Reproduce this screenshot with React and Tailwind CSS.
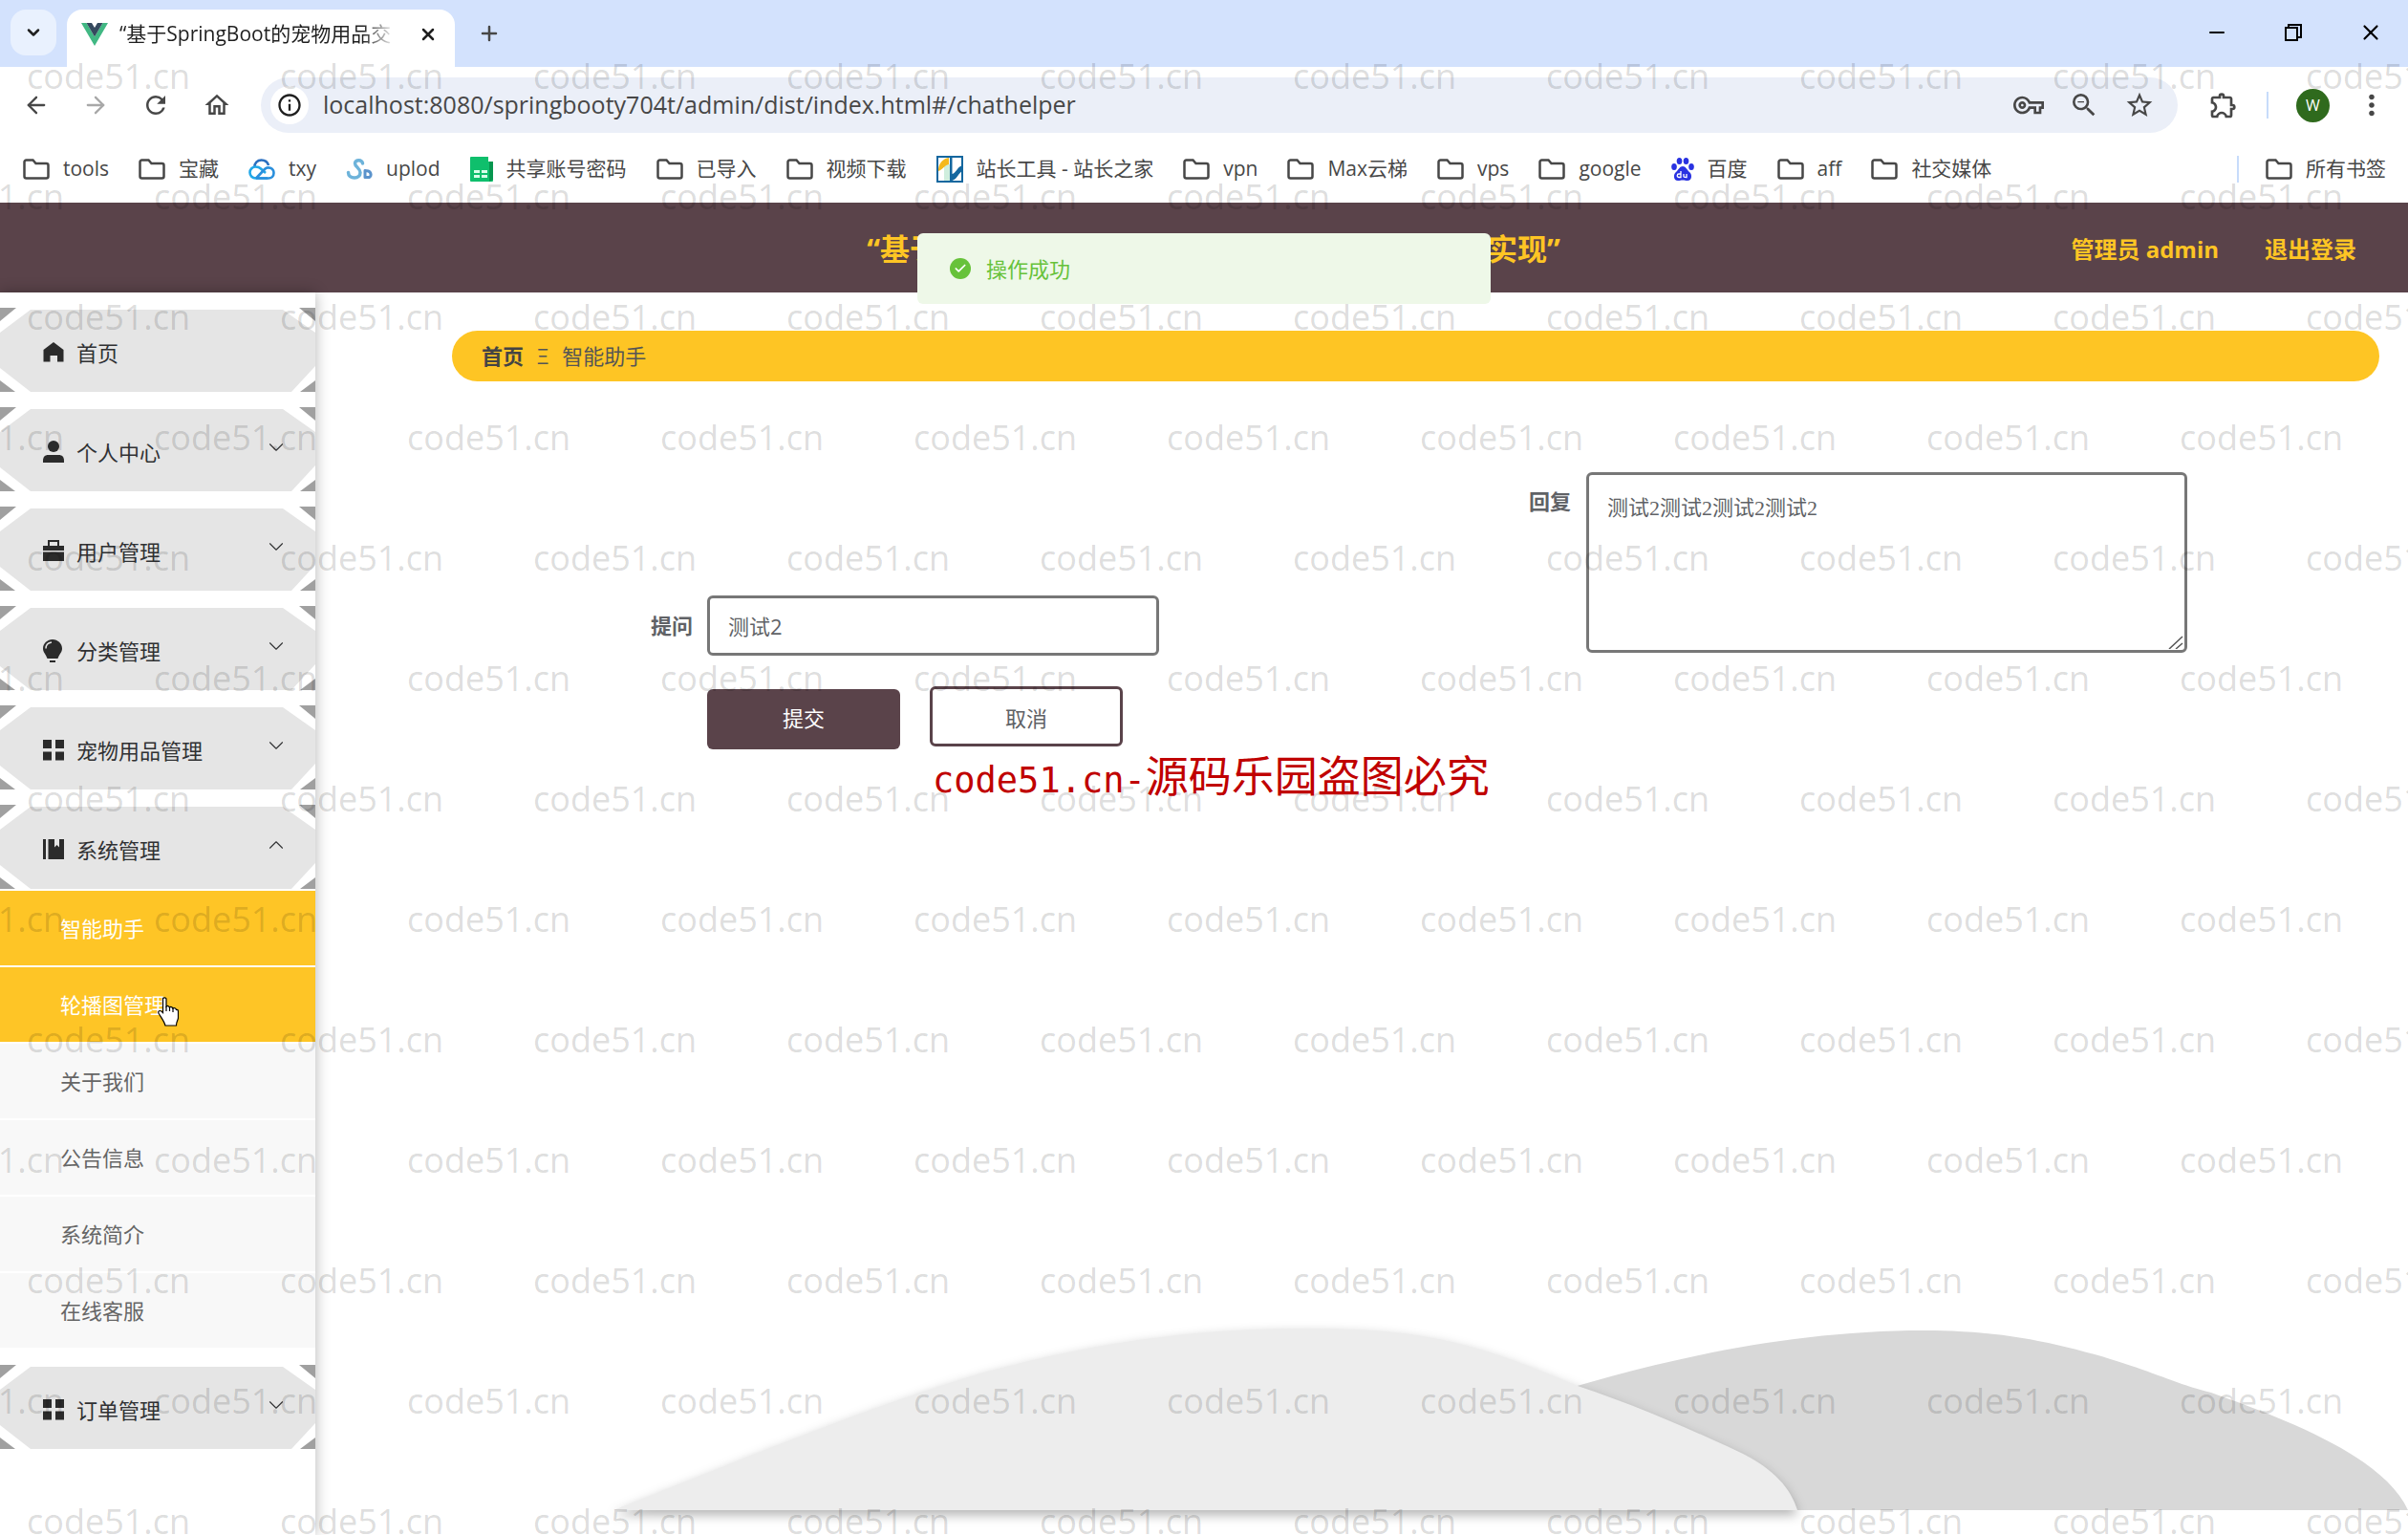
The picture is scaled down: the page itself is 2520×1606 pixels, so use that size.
import React from 'react';
import { ArrowLeft, ArrowRight, Check, ChevronDown, ChevronUp, Minus, Plus, X } from 'lucide-react';
import {
  MdInfoOutline,
  MdMoreVert,
  MdOutlineExtension,
  MdOutlineHome,
  MdOutlineVpnKey,
  MdRefresh,
  MdStarBorder,
  MdZoomOut,
} from 'react-icons/md';

const bookmarks = [
  { label: 'tools' },
  { label: '宝藏' },
  { label: 'txy', icon: 'cloud' },
  { label: 'uplod', icon: 'upload' },
  { label: '共享账号密码', icon: 'sheet' },
  { label: '已导入' },
  { label: '视频下载' },
  { label: '站长工具 - 站长之家', icon: 'zhan' },
  { label: 'vpn' },
  { label: 'Max云梯' },
  { label: 'vps' },
  { label: 'google' },
  { label: '百度', icon: 'baidu' },
  { label: 'aff' },
  { label: '社交媒体' },
];

const menus = [
  { label: '首页', icon: 'home' },
  { label: '个人中心', icon: 'user', children: [] },
  { label: '用户管理', icon: 'case', children: [] },
  { label: '分类管理', icon: 'bulb', children: [] },
  { label: '宠物用品管理', icon: 'grid', children: [] },
  {
    label: '系统管理',
    icon: 'book',
    open: true,
    children: [
      { label: '智能助手', active: true },
      { label: '轮播图管理', active: true, hover: true },
      { label: '关于我们' },
      { label: '公告信息' },
      { label: '系统简介' },
      { label: '在线客服' },
    ],
  },
  { label: '订单管理', icon: 'grid', children: [] },
];

function VueLogo() {
  return (
    <svg viewBox="0 0 28 24" className="w-7 h-6 shrink-0">
      <path d="M0 0h5.500l8.500 14.500L22.500 0H28L14 24z" fill="#41b883" />
      <path d="M5.500 0H11l3 5 3-5h5.500L14 14.500z" fill="#35495e" />
    </svg>
  );
}

function BookmarkIcon({ name }) {
  if (name === 'cloud') {
    return (
      <svg viewBox="0 0 28 22" className="w-7 h-[22px]" fill="none" strokeWidth="2.600">
        <path d="M6.500 9C6 4.500 9.500 1.500 13.500 1.500c3.500 0 6.500 2 7.500 5.500" stroke="#2a6fc0" />
        <path d="M18 15l-5-4.500C11.500 9 9.500 8.500 7.500 8.500a6 6 0 0 0 0 12H20" stroke="#22a8e8" />
        <path d="M8 20.500L17 11c3-3 9.500-1.500 9.500 4 0 3.500-2.500 5.500-5.500 5.500H8" stroke="#2a8fdc" />
      </svg>
    );
  }
  if (name === 'upload') {
    return (
      <svg viewBox="0 0 28 22" className="w-7 h-[22px]" fill="none" strokeWidth="3.500" strokeLinecap="round">
        <path
          d="M17.500 5c0-4-8-4.500-8 0 0 3.500 5.500 5 5.500 9.500 0 3.500-2.500 5.500-6 5.500s-6.500-2-6.500-5.500"
          stroke="#6db3da"
        />
        <path d="M20 12.500v7h4.500c2.500-1 2-5.500-1-6.500z" stroke="#5b93cc" strokeWidth="3" strokeLinejoin="round" />
      </svg>
    );
  }
  if (name === 'sheet') {
    return (
      <svg viewBox="0 0 24 26" className="w-6 h-[26px]">
        <path d="M0 1a1 1 0 0 1 1-1h18v5h5v20a1 1 0 0 1-1 1H1a1 1 0 0 1-1-1z" fill="#0fbf6c" />
        <path d="M20 5h4v19l-4 2z" fill="#07964f" />
        <path d="M4 14h6v3H4zM12 14h6v3h-6zM4 19h6v3H4zM12 19h6v3h-6z" fill="#d8ffe9" />
      </svg>
    );
  }
  if (name === 'zhan') {
    return (
      <svg viewBox="0 0 28 28" className="w-7 h-7">
        <path d="M1 1h26v26H1z" fill="#fff" stroke="#14679f" strokeWidth="2" />
        <path d="M8 9h6v17H8z" fill="#cfeedd" />
        <path d="M2 14c1-7 5-11 11-12v7C8 10 7 14 2 16z" fill="#f5b81c" />
        <path d="M14 1h2.500v26H14zM16.500 19c4-1 5-7 10.500-9v6c-4 2-5 8-10.500 10z" fill="#14679f" />
      </svg>
    );
  }
  if (name === 'baidu') {
    return (
      <svg viewBox="0 0 24 24" className="w-6 h-6" fill="#2932e1">
        <ellipse cx="3" cy="9.500" rx="2.800" ry="3.500" />
        <ellipse cx="8.500" cy="3.500" rx="2.800" ry="3.500" />
        <ellipse cx="15.500" cy="3.500" rx="2.800" ry="3.500" />
        <ellipse cx="21" cy="9.500" rx="2.800" ry="3.500" />
        <path d="M12 9c3 0 4 3 7 6 3 2 3 9-2 9-2 0-3-.5-5-.5S9 24 7 24c-5 0-5-7-2-9 3-3 4-6 7-6z" />
        <path
          d="M10 14v6.500H8a1.500 1.500 0 0 1 0-3.500h2M13 17v2.500c0 1 1 1 3 1V17"
          fill="none"
          stroke="#fff"
          strokeWidth="1.300"
        />
      </svg>
    );
  }
  return (
    <svg viewBox="0 0 28 22" className="w-7 h-[22px]" fill="none" stroke="#474747" strokeWidth="2.500">
      <path d="M1.500 3.500a2 2 0 0 1 2-2h7l3 3.500h11a2 2 0 0 1 2 2v11.500a2 2 0 0 1-2 2h-21a2 2 0 0 1-2-2z" />
    </svg>
  );
}

function MenuIcon({ name }) {
  return (
    <svg viewBox="0 0 22 24" className="w-[22px] h-6 shrink-0" fill="#2b2b2b">
      {name === 'home' && <path d="M11 1l10.500 8v12.500H15V15H7.500v6.500H.500V9z" />}
      {name === 'user' && (
        <>
          <circle cx="11" cy="6" r="6" />
          <path d="M0 23v-2c0-4 2-6 5.500-6h11c3.500 0 5.500 2 5.500 6v2z" />
        </>
      )}
      {name === 'case' && (
        <path d="M5 6V0h12v6h5v5H0V6zM7 2v4h8V2zM0 12.500h22V22H0z" fillRule="evenodd" />
      )}
      {name === 'bulb' && (
        <>
          <path d="M10 0c5.500 0 10 4.300 10 9.500 0 4-3 6-4.500 10.500h-11C3 15.500 0 13.500 0 9.500 0 4.300 4.500 0 10 0z" />
          <path d="M7 22h6v2H7z" />
          <path d="M3 9.500C3 6 5.500 3.500 9 3" fill="none" stroke="#e5e5e5" strokeWidth="1.500" />
        </>
      )}
      {name === 'grid' && <path d="M0 1h9v9H0zM13 1h9v9h-9zM0 13.500h9v9H0zM13 13.500h9v9h-9z" />}
      {name === 'book' && <path d="M0 1h3v21H0zM5.500 1H12v8.500l2.500-2.500L17 9.500V1h5v21H5.500z" />}
    </svg>
  );
}

function MenuPlate() {
  return (
    <svg viewBox="0 0 330 88" preserveAspectRatio="none" className="absolute inset-0 w-full h-full -z-10">
      <path d="M32 2H296L330 26V61L305 88H32L0 63V26z" fill="#e5e5e5" />
      <path d="M0 0H17L0 14zM313 0H330V14zM0 76L16 88H0zM330 76L314 88H330z" fill="#a0a0a0" />
    </svg>
  );
}

function BrowserChrome() {
  return (
    <header className="text-[#474747]">
      <div className="h-[70px] bg-[#d3e2fd] flex items-end pl-[11px]">
        <button
          aria-label="搜索标签页"
          className="w-12 h-12 mb-3 rounded-2xl bg-[#e9f1fe] flex items-center justify-center text-[#1f1f1f]"
        >
          <ChevronDown size={20} strokeWidth={3} />
        </button>
        <div className="w-[406px] h-[60px] ml-[11px] pl-[15px] pr-[18px] pb-2 rounded-t-2xl bg-white flex items-center text-[#1f1f1f]">
          <VueLogo />
          <span className="ml-3 flex-1 overflow-hidden whitespace-nowrap text-[21px] [mask-image:linear-gradient(to_right,black_88%,transparent)]">
            “基于SpringBoot的宠物用品交
          </span>
          <button aria-label="关闭标签页" className="ml-6">
            <X size={20} strokeWidth={3} />
          </button>
        </div>
        <button aria-label="新标签页" className="ml-6 mb-[23px]">
          <Plus size={24} strokeWidth={2.5} />
        </button>
        <div className="ml-auto mb-[23px] pr-[26px] flex items-center gap-14 text-black">
          <button aria-label="最小化">
            <Minus size={24} />
          </button>
          <button aria-label="还原">
            <svg viewBox="0 0 24 24" className="w-6 h-6" fill="none" stroke="currentColor" strokeWidth="2">
              <path d="M4 7h12v13H4zM7 6V4h13v13h-3" />
            </svg>
          </button>
          <button aria-label="关闭">
            <X size={26} strokeWidth={2} />
          </button>
        </div>
      </div>

      <div className="h-20 bg-white flex items-center">
        <div className="flex items-center gap-[34px] pl-6">
          <button aria-label="后退">
            <ArrowLeft size={28} />
          </button>
          <button aria-label="前进" className="text-[#a8a8a8]">
            <ArrowRight size={28} />
          </button>
          <button aria-label="重新加载">
            <MdRefresh size={30} />
          </button>
          <button aria-label="主页">
            <MdOutlineHome size={30} />
          </button>
        </div>
        <div className="flex-1 h-[58px] ml-[31px] pl-[10px] pr-6 rounded-full bg-[#ebeff8] flex items-center">
          <span className="w-10 h-10 rounded-full bg-white flex items-center justify-center text-[#1f1f1f]">
            <MdInfoOutline size={28} />
          </span>
          <input
            aria-label="地址"
            defaultValue="localhost:8080/springbooty704t/admin/dist/index.html#/chathelper"
            className="flex-1 ml-[15px] bg-transparent text-[25px] outline-none"
          />
          <div className="flex items-center gap-[26px]">
            <MdOutlineVpnKey size={32} />
            <MdZoomOut size={32} />
            <MdStarBorder size={32} />
          </div>
        </div>
        <div className="flex items-center ml-8 pr-[21px]">
          <MdOutlineExtension size={32} />
          <span className="w-[2px] h-7 ml-[29px] bg-[#c7dcfb]" />
          <span className="w-[35px] h-[35px] ml-[29px] rounded-full bg-[#2f6a1d] text-white text-base flex items-center justify-center">
            W
          </span>
          <button aria-label="更多" className="ml-[27px]">
            <MdMoreVert size={34} />
          </button>
        </div>
      </div>

      <nav className="h-[62px] bg-white pl-6 pr-[23px] pb-2 flex items-center text-[21px] whitespace-nowrap">
        <div className="flex items-center gap-[31px]">
          {bookmarks.map((item) => (
            <a key={item.label} href="#" className="flex items-center gap-[14px]">
              <BookmarkIcon name={item.icon} />
              {item.label}
            </a>
          ))}
        </div>
        <span className="ml-auto w-[2px] h-7 bg-[#c7dcfb]" />
        <a href="#" className="ml-[28px] flex items-center gap-[14px]">
          <BookmarkIcon />
          所有书签
        </a>
      </nav>
    </header>
  );
}

function TopBar() {
  return (
    <div className="relative h-[94px] pt-[3px] bg-[#5a434a] text-[#fec524] font-bold flex items-center justify-end">
      <h1 className="absolute inset-x-0 text-center pl-5 text-[31px]">
        “基于SpringBoot的宠物用品交易平台的设计与实现”
      </h1>
      <div className="relative flex items-center gap-12 pr-[54px] text-2xl">
        <span>管理员 admin</span>
        <button>退出登录</button>
      </div>
      <div
        role="status"
        className="absolute z-20 top-8 left-1/2 -translate-x-1/2 w-[600px] h-[74px] pl-[34px] rounded-md bg-[#eef8e8] text-[#67c23a] font-normal text-[22px] flex items-center gap-4"
      >
        <span className="w-[22px] h-[22px] rounded-full bg-[#67c23a] flex items-center justify-center">
          <Check size={14} strokeWidth={3} color="#fff" />
        </span>
        操作成功
      </div>
    </div>
  );
}

function Sidebar() {
  return (
    <aside className="relative w-[330px] shrink-0 pt-4 bg-white shadow-[0_0_14px_rgba(0,0,0,0.3)] text-[22px]">
      {menus.map((menu, i) => (
        <div key={i} className="mb-4">
          <a href="#" className="relative z-0 h-[88px] pt-[6px] pl-[45px] pr-7 flex items-center text-[#303133]">
            <MenuPlate />
            <MenuIcon name={menu.icon} />
            <span className="ml-[13px] flex-1">{menu.label}</span>
            {menu.children && (
              <span className="mb-[10px]">
                {menu.open ? <ChevronUp size={26} strokeWidth={1} /> : <ChevronDown size={26} strokeWidth={1} />}
              </span>
            )}
          </a>
          {menu.open && (
            <ul className="pb-[2px]">
              {menu.children.map((child) => (
                <li key={child.label} className="pt-[2px]">
                  <a
                    href="#"
                    className={
                      'relative h-[78px] pl-[63px] flex items-center ' +
                      (child.active ? 'bg-[#fec526] text-white' : 'bg-[#f8f8f8] text-[#666]')
                    }
                  >
                    {child.label}
                    {child.hover && <HandCursor />}
                  </a>
                </li>
              ))}
            </ul>
          )}
        </div>
      ))}
    </aside>
  );
}

function HandCursor() {
  return (
    <svg viewBox="0 0 22 31" className="absolute left-[165px] top-[31px] w-[22px] h-[31px]">
      <path
        d="M5.500 1.500c1-1 3-1 3.500.500v8c1-1 3-.500 3.500 1 1-1 3-.500 3.500 1 1-1 3 0 3.500 1.500 1.500-.500 2 .500 2 2v6c0 3-2 4-2 8.500H8c-1-4-4-8-6.500-12C0 16 1 14.500 2.500 14.500c1 0 2 1 3 2z"
        fill="#fff"
        stroke="#000"
        strokeWidth="1.200"
      />
      <path d="M9 10v5M12.500 11v4M16 12v4" stroke="#000" strokeWidth="1.200" />
    </svg>
  );
}

function Hills() {
  return (
    <svg viewBox="0 0 1870 226" className="block self-end mt-auto w-[1870px] max-w-full overflow-visible">
      <path
        d="M950 200V85C1070 48 1210 12 1364 12c70 0 120 9 178 25 60 17 90 33 122 40 70 25 180 65 206 123z"
        fill="#d8d8d8"
      />
      <path
        d="M-8 200C70 170 240 98 366 60 500 22 610 10 715 10c60 0 105 3 150 13 50 11 90 28 136 47 60 20 120 46 173 71 32 16 50 36 57 59z"
        fill="#ededed"
        className="[filter:drop-shadow(0_5px_6px_rgba(0,0,0,0.3))]"
      />
    </svg>
  );
}

function ChatHelper() {
  return (
    <main className="flex-1 pt-10 flex flex-col text-[22px] text-[#606266]">
      <nav className="h-[53px] ml-[143px] mr-[30px] pl-[31px] rounded-full bg-[#fec524] text-[#555] flex items-center gap-[14px]">
        <a href="#" className="font-bold text-[#444]">
          首页
        </a>
        <span>Ξ</span>
        <span>智能助手</span>
      </nav>

      <form className="mt-[95px] pl-[410px] pr-[231px] flex items-start justify-between">
        <div className="-ml-[59px] pt-[129px]">
          <div className="flex items-center">
            <label htmlFor="ask" className="w-[59px] font-bold">
              提问
            </label>
            <input
              id="ask"
              defaultValue="测试2"
              className="w-[473px] h-[63px] px-[19px] pb-[2px] border-[3px] border-[#777] rounded-md bg-white outline-none"
            />
          </div>
          <div className="ml-[59px] mt-8 flex gap-[31px]">
            <button type="button" className="w-[202px] h-[63px] mt-[3px] pb-[2px] rounded-md bg-[#5a434a] text-white">
              提交
            </button>
            <button type="button" className="w-[202px] h-[63px] pt-1 border-[3px] border-[#5a434a] rounded-md bg-white">
              取消
            </button>
          </div>
        </div>
        <div className="relative flex items-start">
          <label htmlFor="answer" className="w-[60px] pt-[14px] font-bold">
            回复
          </label>
          <textarea
            id="answer"
            defaultValue="测试2测试2测试2测试2"
            className="block w-[629px] h-[189px] px-[19px] py-[18px] border-[3px] border-[#777] rounded-md bg-white outline-none resize-none font-['Liberation_Serif','Noto_Sans_CJK_SC',serif]"
          />
          <svg
            viewBox="0 0 16 14"
            className="absolute right-1 bottom-1 w-4 h-[14px]"
            fill="none"
            stroke="#555"
            strokeWidth="1.500"
          >
            <path d="M1 14L15 1M8 14l7-6" />
          </svg>
        </div>
      </form>

      <Hills />
    </main>
  );
}

function Watermark() {
  return (
    <div aria-hidden="true" className="absolute inset-0 z-30 pt-[17px] overflow-hidden pointer-events-none">
      {Array.from({ length: 13 }, (_, row) => (
        <div
          key={row}
          className={'h-[126px] flex items-center text-4xl text-black/15 ' + (row % 2 ? '-ml-[104px]' : 'ml-[28px]')}
        >
          {Array.from({ length: 10 }, (_, col) => (
            <span key={col} className="w-[265px] shrink-0">
              code51.cn
            </span>
          ))}
        </div>
      ))}
      <p className="absolute left-[976px] top-[779px] text-[45px] leading-[66px] whitespace-nowrap text-[#c00000]">
        <span className="text-[37px] font-['DejaVu_Sans_Mono',monospace]">code51.cn-</span>源码乐园盗图必究
      </p>
    </div>
  );
}

export default function App() {
  return (
    <div className="relative min-h-screen flex flex-col overflow-hidden bg-white font-['Open_Sans','Noto_Sans_CJK_SC',sans-serif]">
      <BrowserChrome />
      <TopBar />
      <div className="flex-1 flex">
        <Sidebar />
        <ChatHelper />
      </div>
      <Watermark />
    </div>
  );
}
